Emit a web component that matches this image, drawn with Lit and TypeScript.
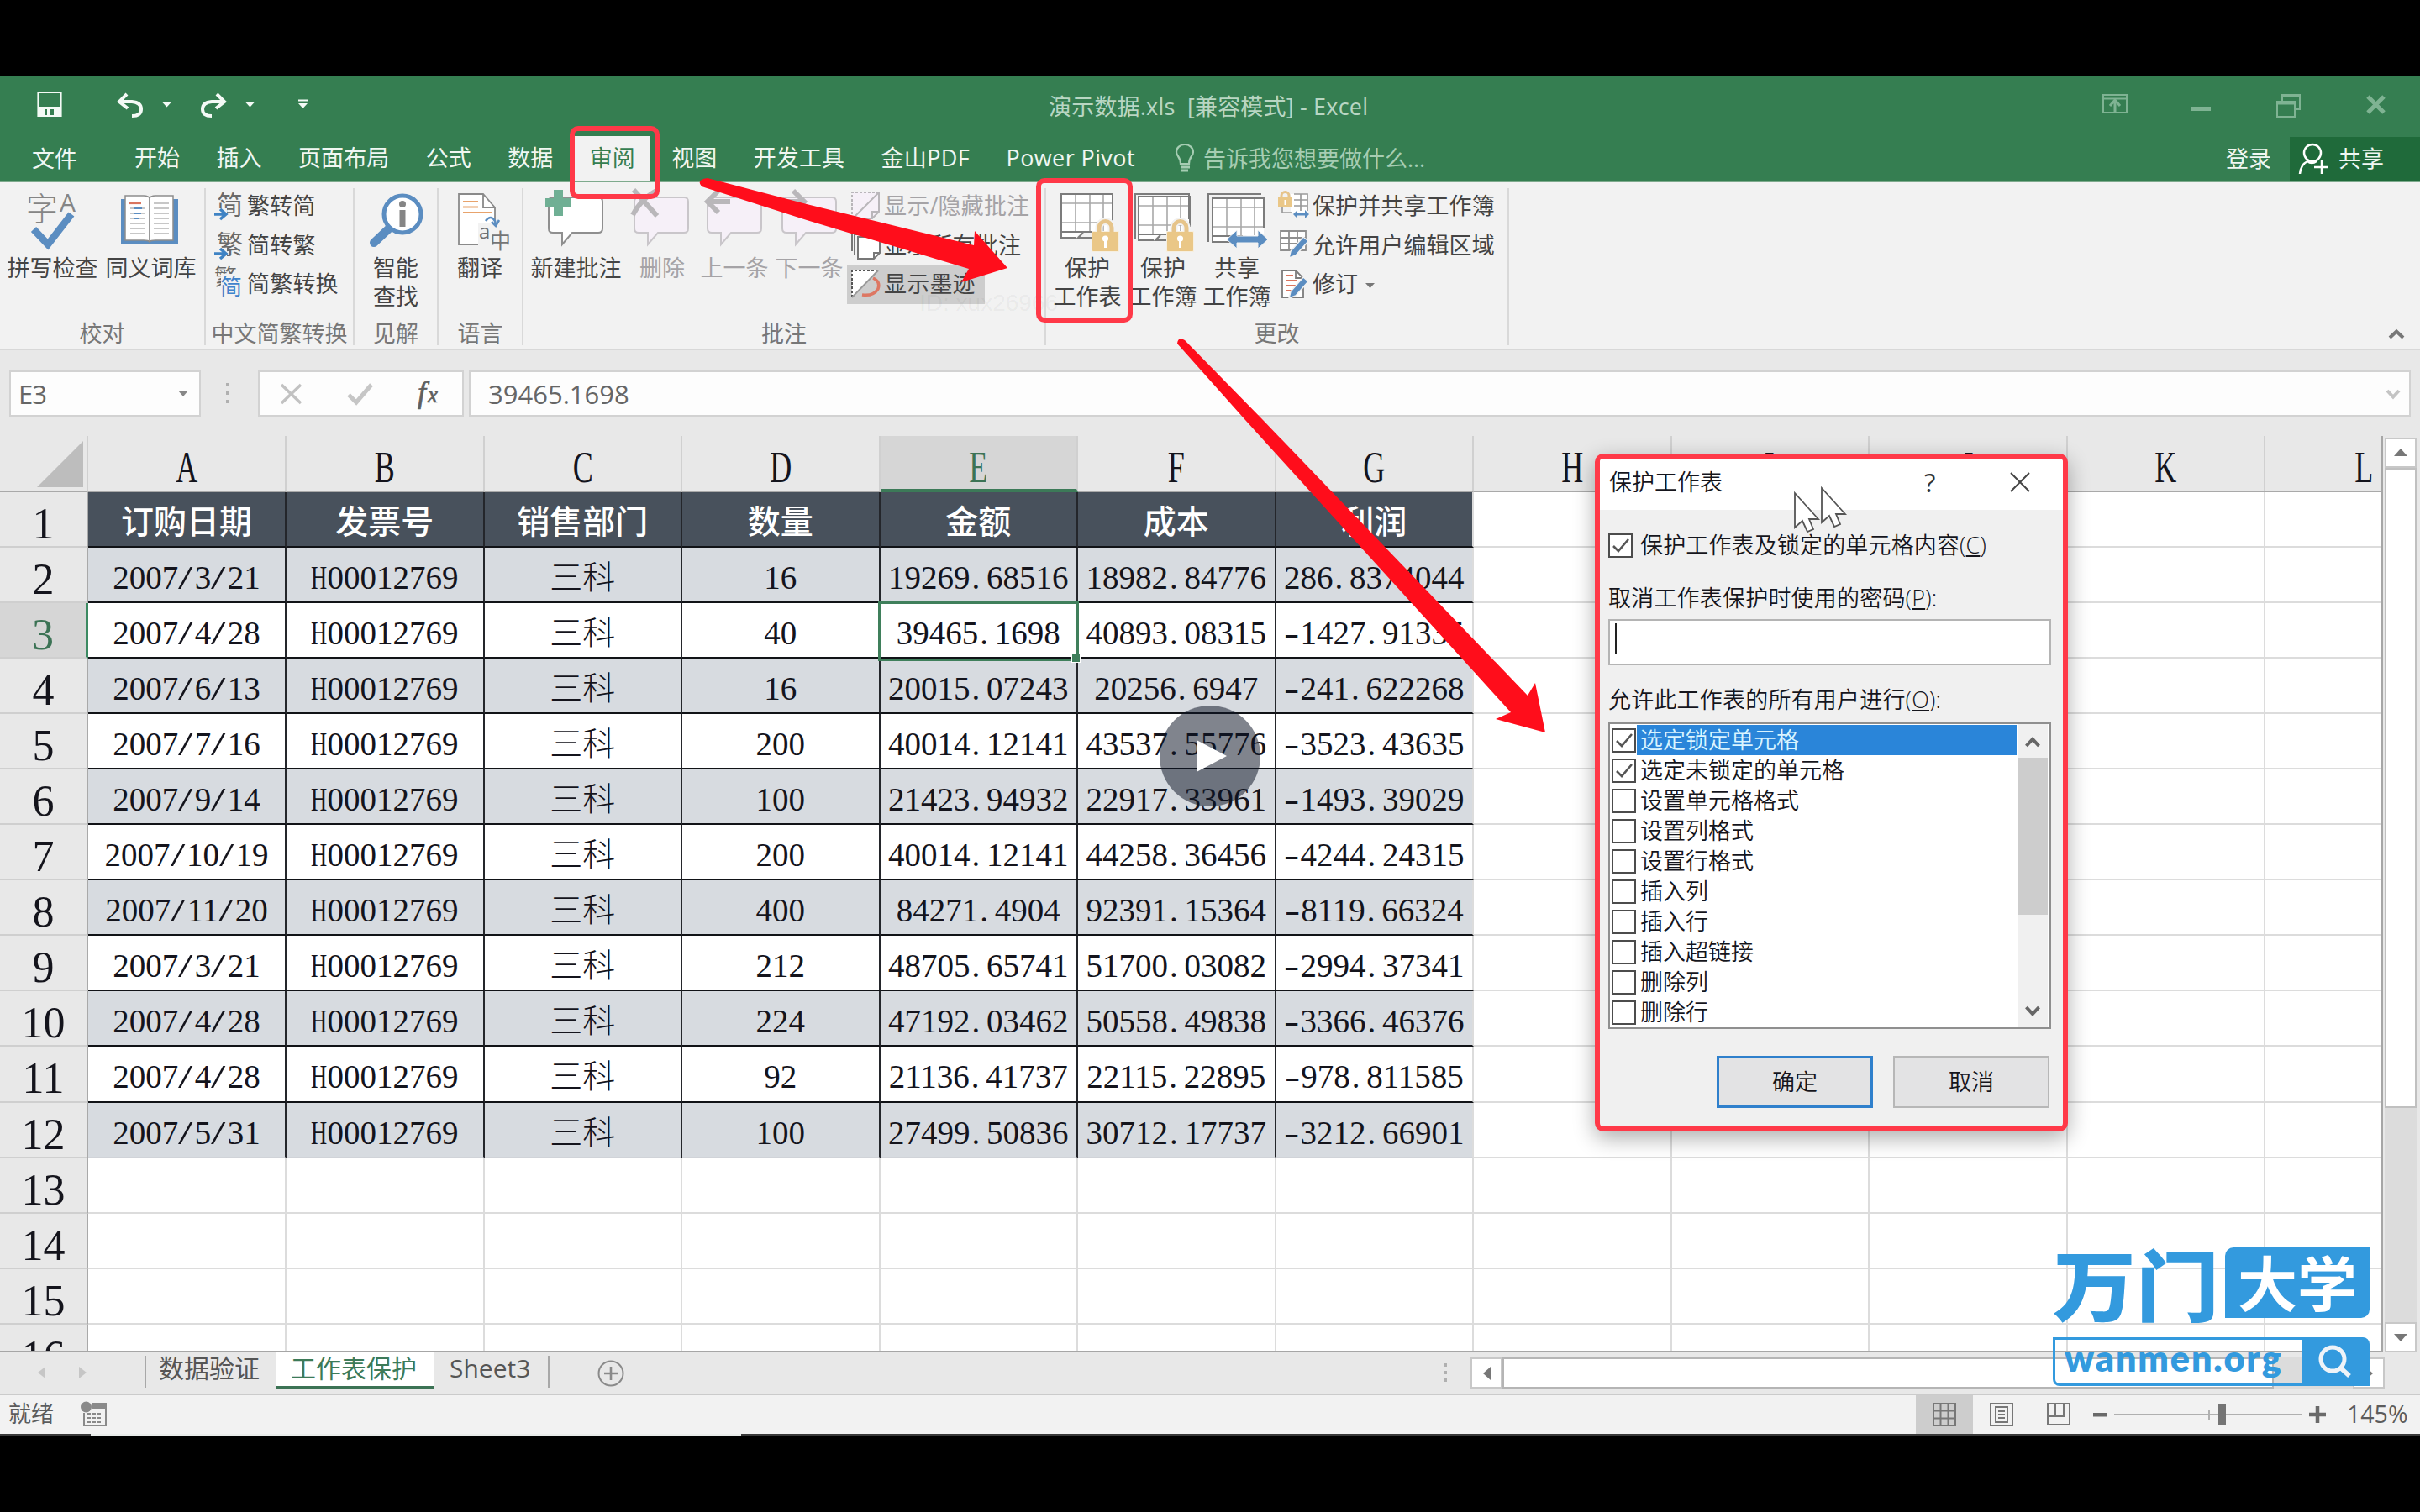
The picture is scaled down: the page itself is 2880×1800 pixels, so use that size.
import { LitElement, html, svg, css, nothing, type TemplateResult } from "lit";
import { customElement, property } from "lit/decorators.js";
import { classMap } from "lit/directives/class-map.js";

/** Icon frame: the four numbers are the viewBox, which is also the drawn size. */
const icon = (x: number, y: number, w: number, h: number, body: unknown) =>
  html`<svg class="icon" width=${w} height=${h} viewBox="${x} ${y} ${w} ${h}">${body}</svg>`;

const BLUE = "#5b8dc1";

/* ---------- sheet data ---------- */
const COLS = ["A", "B", "C", "D", "E", "F", "G", "H", "I", "J", "K", "L"];
const HEADS = ["订购日期", "发票号", "销售部门", "数量", "金额", "成本", "利润"];
const ROWS = [
  ["2007/3/21", "H00012769", "三科", "16", "19269.68516", "18982.84776", "286.8374044"],
  ["2007/4/28", "H00012769", "三科", "40", "39465.1698", "40893.08315", "-1427.91335"],
  ["2007/6/13", "H00012769", "三科", "16", "20015.07243", "20256.6947", "-241.622268"],
  ["2007/7/16", "H00012769", "三科", "200", "40014.12141", "43537.55776", "-3523.43635"],
  ["2007/9/14", "H00012769", "三科", "100", "21423.94932", "22917.33961", "-1493.39029"],
  ["2007/10/19", "H00012769", "三科", "200", "40014.12141", "44258.36456", "-4244.24315"],
  ["2007/11/20", "H00012769", "三科", "400", "84271.4904", "92391.15364", "-8119.66324"],
  ["2007/3/21", "H00012769", "三科", "212", "48705.65741", "51700.03082", "-2994.37341"],
  ["2007/4/28", "H00012769", "三科", "224", "47192.03462", "50558.49838", "-3366.46376"],
  ["2007/4/28", "H00012769", "三科", "92", "21136.41737", "22115.22895", "-978.811585"],
  ["2007/5/31", "H00012769", "三科", "100", "27499.50836", "30712.17737", "-3212.66901"],
];
const TABS = ["开始", "插入", "页面布局", "公式", "数据", "审阅", "视图", "开发工具", "金山PDF", "Power Pivot"];
const PERMS = ["选定锁定单元格", "选定未锁定的单元格", "设置单元格格式", "设置列格式", "设置行格式", "插入列", "插入行", "插入超链接", "删除列", "删除行"];

/* ---------- icon parts ---------- */
const gridIcon = (x: number, y: number) => svg`
  <path d="M${x} ${y}h61v52h-13l-8-8h-14l-9 8h-17z" fill="#fff" stroke="none"/>
  <path d="M${x + 17} ${y}v44M${x + 34} ${y}v44M${x + 50} ${y}v44M${x} ${y + 11}h61M${x} ${y + 34}h61" stroke="#a9a9a9" stroke-width="1.6" fill="none"/>
  <path d="M${x + 36} ${y + 52}h-16l6-6M${x + 18} ${y + 52}h-18v-52h61v36M${x} ${y + 45}h36" stroke="#7c7c7c" stroke-width="2" fill="none"/>`;
const lock = (x: number, y: number) => svg`
  <path d="M${x + 8} ${y + 16}v-6a7.500 7.500 0 0 1 15 0v6" fill="none" stroke="#f2f2f2" stroke-width="9"/>
  <rect x=${x - 1} y=${y + 14} width="33" height="25" fill="#f6efe0"/>
  <path d="M${x + 8} ${y + 16}v-6a7.500 7.500 0 0 1 15 0v6" fill="none" stroke="#e6c48a" stroke-width="5"/>
  <rect x=${x} y=${y + 15} width="31" height="23" rx="1" fill="#eac787"/>
  <circle cx=${x + 15.500} cy=${y + 23} r="3.600" fill="#fff"/><rect x=${x + 14} y=${y + 24} width="3" height="10" fill="#fff"/>`;
const bubble = (x: number, fill: string, line: string) => svg`
  <path d="M${x + 4} 235h54q5 0 5 5v32q0 5-5 5h-31l-12 14v-14h-11q-5 0-5-5v-32q0-5 5-5z" fill=${fill} stroke=${line} stroke-width="2"/>`;
const miniBlueArrow = (x: number, y: number) => svg`
  <path d="M${x} ${y + 5}l5-5v3.500h9v-3.500l5 5-5 5v-3.500h-9v3.500z" fill=${BLUE}/>`;
const pencil = (x: number, y: number) => svg`
  <path d="M${x + 17} ${y}l6 5-15 17-8 3 2-8z" fill=${BLUE} stroke="#f2f2f2" stroke-width="1.500"/>`;
const noteCorner = (line: string, dash: boolean, fill: string) => svg`
  <path d="M1 1h32v23l-8 8h-24z" fill=${fill}/>
  <path d="M33 1h-32v31" fill="none" stroke=${line} stroke-width="2" stroke-dasharray=${dash ? "3 2" : "none"}/>
  <path d="M1 32h24l8-8v-23M25 32v-8h8" fill="none" stroke=${line} stroke-width="2"/>`;

const ICONS = {
  spell: icon(4, 228, 117, 74, svg`
    <text x="31" y="262" font-size="38" font-weight="300" fill="#858585" font-family="Noto Sans CJK SC, sans-serif">字</text>
    <text x="71" y="252" font-size="30" fill="#858585" font-family="Open Sans, sans-serif">A</text>
    <path d="M40 273l17 18 28-36" fill="none" stroke=${BLUE} stroke-width="8.500"/>`),
  book: icon(121, 228, 117, 74, svg`
    <rect x="144" y="237" width="68" height="54" fill=${BLUE}/>
    <path d="M149 233h22q6 0 7 3 1-3 7-3h21v53h-21q-6 0-7 2-1-2-7-2h-22z" fill="#fff" stroke="#8d8d8d" stroke-width="1.500"/>
    <path d="M178 236v51" stroke="#9a9a9a" stroke-width="2"/>
    <path d="M155 248h17M155 254h17M155 260h17M155 266h17M155 272h17M155 278h17M183 242h18M183 248h18M183 254h18M183 260h18M183 266h18M183 272h18M183 278h18" stroke="#b5b5b5" stroke-width="1.600"/>
    <path d="M154 242h14" stroke="#d9755f" stroke-width="2.200"/><path d="M159 248h10M159 254h9M159 260h7" stroke=${BLUE} stroke-width="2"/>`),
  lookup: icon(421, 228, 100, 74, svg`
    <path d="M463 272l-18 17" stroke=${BLUE} stroke-width="10" stroke-linecap="round"/>
    <circle cx="479" cy="255" r="22" fill="#fff" stroke=${BLUE} stroke-width="5"/>
    <circle cx="479" cy="243" r="4" fill="#858585"/><rect x="475.500" y="250" width="7" height="20" fill="#858585"/>`),
  translate: icon(522, 228, 100, 74, svg`
    <path d="M547 231h30l13 15v45h-43z" fill="#fff"/>
    <path d="M582 291h-35v-60h29l14 16v16M576 231v16h14" fill="none" stroke="#8a8a8a" stroke-width="1.800"/>
    <path d="M552 240h18M552 246.500h18M552 253h34" stroke="#e8a36c" stroke-width="2"/>
    <path d="M570 266h38v36h-38z" fill="#f2f2f2"/>
    <text x="571" y="284" font-size="24" fill="#6f6f6f" font-family="Open Sans, sans-serif">a</text>
    <text x="584" y="296" font-size="25" fill="#757575" font-family="Noto Sans CJK SC, sans-serif">中</text>
    <path d="M579 263q6-8 11 0l1 4M586 264l5 5 4-7" fill="none" stroke=${BLUE} stroke-width="2.600"/>`),
  newNote: icon(622, 226, 128, 76, svg`${bubble(654, "#fff", "#8f8f8f")}
    <rect x="659" y="226" width="11" height="31" fill="#6faf94"/><rect x="649" y="236" width="31" height="11" fill="#6faf94"/>`),
  delNote: icon(750, 226, 76, 76, svg`${bubble(756, "#f6f0f8", "#c9c6ca")}
    <path d="M754 226l28 31M781 227q-18 10-28 29" stroke="#b9b7ba" stroke-width="6" fill="none"/>`),
  prevNote: icon(826, 226, 96, 76, svg`${bubble(843, "#f6f0f8", "#c9c6ca")}
    <path d="M842 240h27M855 227l-13 13 13 13" stroke="#b9b7ba" stroke-width="6" fill="none"/>`),
  nextNote: icon(922, 226, 82, 76, svg`${bubble(932, "#f6f0f8", "#c9c6ca")}
    <path d="M930 240h27M944 227l13 13-13 13" stroke="#b9b7ba" stroke-width="6" fill="none"/>`),
  protectSheet: icon(1249, 228, 90, 74, svg`${gridIcon(1263, 231)}${lock(1300, 261)}`),
  protectBook: icon(1339, 228, 90, 74, svg`${gridIcon(1355, 234)}<path d="M1351 284v-53h64v30" fill="none" stroke="#7c7c7c" stroke-width="2"/>${lock(1389, 261)}`),
  shareBook: icon(1429, 228, 86, 74, svg`${gridIcon(1443, 236)}<path d="M1438 288v-57h63" fill="none" stroke="#7c7c7c" stroke-width="2"/>
    <path d="M1460 285l12-11v7h25v-7l12 11-12 11v-7h-25v7z" fill=${BLUE} stroke="#f2f2f2" stroke-width="1"/>`),
};

const convIcon = (back: string, front: string, both: boolean) => html`<svg class="icon" width="38" height="40" viewBox="0 0 38 40">
  ${both
    ? svg`<text x="2" y="22" font-size="27" fill="#6a6a6a" font-family="Noto Sans CJK SC, sans-serif">${back}</text>
      <rect x="10" y="8" width="26" height="30" fill="#f2f2f2"/>
      <text x="9" y="33" font-size="26" fill="#3f83cc" font-family="Noto Sans CJK SC, sans-serif">${front}</text>`
    : svg`<text x="5" y="30" font-size="31" fill="#6a6a6a" font-family="Noto Sans CJK SC, sans-serif">${back}</text>
      <rect x="0" y="23" width="17" height="13" fill="#f2f2f2"/>
      <path d="M2 30h13M9 24l7 6-7 6" fill="none" stroke="#3f83c4" stroke-width="3.500"/>`}
</svg>`;

/** Text set on a half-em pitch, so that digits, signs and capitals share one advance. */
const pitch = (text: string): TemplateResult[] =>
  [...text].map((c) =>
    /[\/.\-H]/.test(c)
      ? html`<span class=${c === "H" ? "half wide" : c === "-" ? "half dash" : c === "/" ? "half slash" : "half dot"}>${c}</span>`
      : html`${c}`);

@customElement("ribbon-group")
class RibbonGroup extends LitElement {
  @property() label = "";
  static styles = css`
    :host { display: flex; flex-direction: column; height: 199px; box-sizing: border-box; position: relative; }
    .body { display: flex; height: 163px; }
    .label { height: 34px; line-height: 34px; text-align: center; color: #777; white-space: nowrap; margin-left: -2px; }
    .rule { position: absolute; right: 0; top: 7px; bottom: 5px; width: 2px; background: #d9d9d9; }
  `;
  render() {
    return html`<div class="body"><slot></slot></div><div class="label">${this.label}</div><div class="rule"></div>`;
  }
}

@customElement("protect-dialog")
class ProtectDialog extends LitElement {
  static styles = css`
    :host { display: flex; flex-direction: column; box-sizing: border-box; width: 563px; height: 807px; border: 6px solid #ff3948;
      border-radius: 10px; background: #f0f0f0; box-shadow: 0 8px 26px rgba(0,0,0,.32); font-size: 27px; color: #15151c;
      font-weight: 350; overflow: hidden; }
    .icon { display: block; flex: none; overflow: visible; }
    .bar { display: flex; align-items: center; height: 61px; background: #fff; padding: 0 0 6px 11px; box-sizing: border-box; }
    .bar .name { flex: 1; }
    .bar .help { font-size: 31px; width: 18px; margin-right: 84px; color: #333; font-weight: 400; }
    .bar .icon { margin-right: 39px; }
    .content { display: flex; flex-direction: column; padding: 22px 14px 0 10px; }
    .lock-row { display: flex; align-items: center; height: 40px; gap: 9px; letter-spacing: .15px; }
    .box { width: 29px; height: 29px; box-sizing: border-box; border: 2px solid #4c4c4c; background: #fff; flex: none; }
    .box svg { display: block; }
    .lbl { height: 36px; line-height: 36px; white-space: nowrap; letter-spacing: .2px; }
    .l1 { margin-top: 25px; }
    .l2 { margin-top: 23px; }
    .field { height: 55px; box-sizing: border-box; border: 2px solid #b4b4b4; background: #fff; margin-top: 7px; padding: 3px 6px; }
    .caret { width: 2px; height: 36px; background: #222; }
    .list { display: flex; justify-content: space-between; height: 365px; box-sizing: border-box; border: 2px solid #8f8f8f; background: #fff; margin-top: 9px; padding-right: 2px; overflow: hidden; }
    .items { display: flex; flex-direction: column; width: 484px; padding-top: 1px; }
    .item { display: flex; align-items: center; height: 36.050px; padding-left: 2px; gap: 1px; flex: none; }
    .item .txt { flex: 1; line-height: 36px; padding-left: 4px; }
    .item.sel .txt { background: #2a85d9; color: #d9f4ff; }
    .scroll { display: flex; flex-direction: column; width: 36px; background: #f0f0f0; align-items: center; }
    .scroll .up { padding: 15px 0 12px; }
    .thumb { width: 36px; height: 187px; background: #cdcdcd; }
    .scroll .down { margin-top: 108px; }
    .buttons { display: flex; justify-content: flex-end; gap: 24px; margin-top: 32px; padding-right: 2px; }
    .btn { width: 186px; height: 62px; box-sizing: border-box; border: 2px solid #b7b7b7; background: #e3e3e4; line-height: 57px; text-align: center; }
    .btn.ok { border: 3px solid #2f80cc; line-height: 55px; }
  `;
  private check(on: boolean) {
    return html`<span class="box">${on ? html`<svg width="25" height="25" viewBox="0 0 25 25"><path d="M4 13l6 6 12-14" fill="none" stroke="#555" stroke-width="2.600"/></svg>` : nothing}</span>`;
  }
  render() {
    return html`
      <div class="bar"><span class="name">保护工作表</span><span class="help">?</span>
        ${icon(0, 0, 24, 24, svg`<path d="M1 1l22 22M23 1l-22 22" stroke="#444" stroke-width="2"/>`)}</div>
      <div class="content">
        <div class="lock-row">${this.check(true)}<span>保护工作表及锁定的单元格内容(<u>C</u>)</span></div>
        <div class="lbl l1">取消工作表保护时使用的密码(<u>P</u>):</div>
        <div class="field"><div class="caret"></div></div>
        <div class="lbl l2">允许此工作表的所有用户进行(<u>O</u>):</div>
        <div class="list">
          <div class="items">${PERMS.map((p, i) => html`<div class=${classMap({ item: true, sel: i === 0 })}>${this.check(i < 2)}<span class="txt">${p}</span></div>`)}</div>
          <div class="scroll">
            <div class="up">${icon(0, 0, 18, 13, svg`<path d="M1.500 11l7.500-8 7.500 8" fill="none" stroke="#666" stroke-width="4"/>`)}</div>
            <div class="thumb"></div>
            <div class="down">${icon(0, 0, 18, 13, svg`<path d="M1.500 2l7.500 8 7.500-8" fill="none" stroke="#666" stroke-width="4"/>`)}</div>
          </div>
        </div>
        <div class="buttons"><div class="btn ok">确定</div><div class="btn">取消</div></div>
      </div>`;
  }
}

@customElement("app-root")
class AppRoot extends LitElement {
  static styles = css`
    :host { display: block; width: 2880px; height: 1800px; background: #000; position: relative; overflow: hidden;
      font-family: "Open Sans", "Noto Sans CJK SC", sans-serif; font-size: 27px; line-height: 34px; color: #444; }
    .icon { display: block; flex: none; overflow: visible; }
    .app { display: flex; flex-direction: column; padding-top: 90px; }
    .title { display: flex; height: 73px; background: #357e51; color: #b9d6c3; align-items: center; }
    .quick { display: flex; width: 1248px; }
    .name { flex: 1; white-space: pre; letter-spacing: .2px; }
    .tabs { display: flex; height: 54px; background: #357e51; color: #f0f7f2; align-items: center; white-space: nowrap; box-sizing: border-box; border-bottom: 2px solid #7eaa8d; }
    .file { width: 160px; padding-left: 38px; box-sizing: border-box; }
    .main { display: flex; gap: 7.300px; margin-left: -18px; height: 54px; letter-spacing: .1px; }
    .tab { line-height: 52px; padding: 0 18px; }
    .tab.on { background: #f2f2f2; color: #357e51; }
    .tab.latin { letter-spacing: .4px; }
    .tell { display: flex; align-items: center; gap: 10px; margin-left: 29px; color: #a6cdb3; flex: 1; }
    .login { margin-right: 22px; }
    .share { display: flex; align-items: center; gap: 12px; width: 155px; height: 53px; background: #1f6a3a; padding-left: 11px; box-sizing: border-box; }

    .ribbon { display: flex; height: 200px; background: #f2f2f2; box-sizing: border-box; border-bottom: 2px solid #d8d8d8; }
    .big { display: flex; flex-direction: column; align-items: center; text-align: center; white-space: nowrap; padding-top: 11px; line-height: 34px; }
    .big.hi { padding-top: 9px; }
    .dim { color: #a5a3a6; }
    .rows { display: flex; flex-direction: column; padding-top: 5px; }
    .row { display: flex; align-items: center; height: 46.500px; gap: 3px; white-space: nowrap; letter-spacing: .2px; }
    .g1 { width: 245px; } .g1 .big:first-child { margin-left: 4px; }
    .g2 { width: 177px; } .g2 .rows { padding-left: 8px; }
    .g3 { width: 100px; } .g4 { width: 101px; } .g5 { width: 622px; } .g6 { width: 551px; }
    .w117 { width: 117px; } .w100 { width: 100px; } .w128 { width: 127px; } .w76 { width: 76px; } .w96 { width: 96px; } .w82 { width: 82px; }
    .w90 { width: 90px; } .w86 { width: 86px; }
    .g3 .big, .g4 .big { margin-left: -1px; }
    .g5 .big:first-child { margin-left: -1px; margin-right: 1px; }
    .g6 .big:first-child { margin-left: 4px; }
    .g5 .rows { margin-left: 4px; } .g5 .row { padding-left: 5px; gap: 5px; padding-right: 8px; }
    .g5 .row.on { background: #cdcdcd; width: 151px; }
    .g6 .rows { margin-left: 6px; } .g6 .row { gap: 5px; letter-spacing: .1px; }
    .collapse { margin: 175px 0 0 1046px; }

    .formula { display: flex; height: 102px; background: #e8e8e8; padding: 24px 0 0 11px; box-sizing: border-box; font-size: 31px; color: #666; }
    .fbox { height: 55px; background: #fdfdfd; border: 2px solid #d2d2d2; box-sizing: border-box; display: flex; align-items: center; line-height: 50px; }
    .ref { width: 228px; justify-content: space-between; padding: 0 13px 0 9px; letter-spacing: -1px; }
    .dots { margin: 15px 32px 0 28px; }
    .fx { width: 245px; padding-left: 24px; }
    .val { flex: 1; margin: 0 11px 0 6px; justify-content: space-between; padding: 0 10px 0 21px; }

    .work { display: flex; height: 1091px; background: #e8e8e8; }
    .sheet { width: 2836px; height: 1091px; overflow: hidden; position: relative; box-sizing: border-box; border-right: 2px solid #a6a6a6; border-bottom: 2px solid #a6a6a6; background: #fff;
      font-family: "Liberation Serif", "Noto Sans CJK SC", serif; color: #14141c; }
    .line { display: grid; grid-template-columns: 105px 236px repeat(11, 235.500px); height: 66.050px; }
    .line.top { height: 67px; }
    .line > div { box-sizing: border-box; text-align: center; white-space: nowrap; }
    .ch { font-size: 53px; line-height: 74px; background: #e8e8e8; border-right: 2px solid #d0d0d0; border-bottom: 2px solid #a9a9a9; overflow: hidden; }
    .ch span { display: inline-block; transform: scaleX(.68); }
    .ch.on { background: #d6d6d6; color: #3c7355; border-bottom: 4px solid #3c7a58; }
    .rh { font-size: 52px; line-height: 76px; height: 66.050px; overflow: hidden; background: #e8e8e8; border-right: 2px solid #a9a9a9; border-bottom: 2px solid #cfcfcf; }
    .rh.on { background: #d6d6d6; color: #3c7355; border-right: 3px solid #3c8a62; }
    .corner { background: #e8e8e8; border-right: 2px solid #d0d0d0; border-bottom: 2px solid #a9a9a9; padding: 6px 0 0 44px; }
    .c { font-size: 39px; line-height: 71px; height: 66.050px; border-right: 2px solid #dcdcdc; border-bottom: 2px solid #dcdcdc; }
    .c.d { border-right-color: #24262b; border-bottom-color: #111317; }
    .c.g { border-right-color: #dcdcdc; }
    .c.last { border-bottom-color: #d0d3d8; }
    .c.band { background: #d7dbe0; }
    .c.h { background: #48515c; color: #fff; font-weight: 500; }
    .c.zh { font-weight: 300; }
    .half { display: inline-block; width: .5em; text-align: left; }
    .wide { transform: scaleX(.68); transform-origin: 0 0; }
    .dash { transform: scaleX(1.400); transform-origin: 0 0; }
    .slash { transform: scaleX(1.600); transform-origin: 0 0; }
    .dot { text-indent: .050em; }
    .cursor { position: absolute; left: 1045px; top: 197px; width: 239px; height: 71px; box-sizing: border-box; border: 3px solid #3f7f5b; }
    .cursor i { position: absolute; right: -5px; bottom: -5px; width: 9px; height: 9px; background: #3f7f5b; border: 1px solid #fff; }
    .vbar { display: flex; flex-direction: column; width: 38px; margin-left: 2px; padding-top: 2px; }
    .sbtn { background: #fff; border: 2px solid #c8c8c8; box-sizing: border-box; display: flex; align-items: center; justify-content: center; }
    .vbar .sbtn { height: 36px; }
    .vthumb { height: 763px; background: #fff; border: 2px solid #c0c0c0; box-sizing: border-box; }
    .vtrack { height: 256px; background: #dcdcdc; }

    .sheets { display: flex; height: 51px; background: #e8e8e8; box-sizing: border-box; border-bottom: 2px solid #cbcbcb; font-size: 30px; line-height: 38px; color: #555; white-space: nowrap; }
    .nav { display: flex; gap: 40px; padding: 17px 0 0 45px; width: 127px; }
    .stab { height: 38px; margin-top: 4px; box-sizing: border-box; line-height: 29px; border-left: 2px solid #a8a8a8; width: 157px; padding-left: 15px; }
    .stab.on { background: #fff; color: #3c7a58; border-left: 0; border-bottom: 4px solid #3c7355; height: 46px; margin-top: -2px; width: 187px; padding: 6px 0 0 17px; }
    .stab.last { border-left: 0; width: 138px; border-right: 2px solid #a8a8a8; padding-left: 19px; font-size: 30px; }
    .plus { margin: 9px 0 0 57px; }
    .hbar { display: flex; margin: 6px 0 0 975px; align-items: flex-start; }
    .hbar .sbtn { height: 37px; width: 38px; }
    .hthumb { width: 918px; height: 37px; background: #fff; border: 2px solid #b5b5b5; box-sizing: border-box; }
    .htrack { width: 94px; height: 37px; background: #dcdcdc; }
    .hdots { margin: 7px 27px 0 0; }

    .status { display: flex; height: 46px; background: #f2f2f2; align-items: center; color: #5c5c5c; padding-left: 10px; }
    .status .ready { width: 86px; margin-top: -2px; }
    .status .modes { display: flex; margin-left: auto; align-items: center; }
    .mode { width: 68px; height: 46px; display: flex; align-items: center; justify-content: center; }
    .mode.on { background: #cdcdcd; }
    .pct { font-size: 28.500px; width: 87px; margin: -2px 0 0 -2px; }
    .edge { display: flex; height: 3px; background: #3a3a3a; padding-left: 108px; }
    .edge i { width: 774px; background: #e9ecea; }

    .over { position: absolute; left: 0; top: 0; }
    .frame { position: absolute; box-sizing: border-box; border: 6px solid #ff3948; border-radius: 10px; }
    .f1 { left: 678px; top: 150px; width: 107px; height: 87px; }
    .f2 { left: 1233px; top: 212px; width: 115px; height: 172px; }
    .mark { position: absolute; left: 1094px; top: 344px; font: 28px/34px "Liberation Sans", sans-serif; color: rgba(0,0,0,.055); }
    .dialog { position: absolute; left: 1898px; top: 540px; }
    .logo { position: absolute; left: 2443px; top: 1485px; width: 377px; color: #339ade; display: flex; flex-direction: column; gap: 23px; }
    .brand { display: flex; height: 84px; gap: 8px; font-weight: 700; }
    .brand .a { font-size: 99px; line-height: 84px; width: 197px; white-space: nowrap; font-family: "Noto Sans CJK SC", sans-serif; font-weight: 900; transform: scaleY(.93); transform-origin: 0 38%; }
    .brand .b { flex: 1; background: #339ade; color: #fff; border-radius: 10px 0 10px 0; text-align: center; font-size: 71px; line-height: 78px; font-family: "Noto Sans CJK SC", sans-serif; }
    .site { display: flex; height: 58px; box-sizing: border-box; border: 3px solid #339ade; border-radius: 0 8px 0 8px; }
    .site .url { flex: 1; font: 800 43px/43px Lato, sans-serif; padding-left: 11px; letter-spacing: 1.900px; }
    .site .go { width: 78px; background: #339ade; display: flex; align-items: center; justify-content: center; }
  `;

  private titleBar() {
    const w = "#f4faf6";
    const f = "#7fb393";
    return html`<div class="title">
      <div class="quick">${icon(0, 90, 400, 73, svg`
        <path d="M45.500 110h27v28h-27z" fill="none" stroke=${w} stroke-width="2.200"/><rect x="46" y="127" width="27" height="11" fill=${w}/><path d="M53 130h3v7h-3zM59 130h5v7h-5z" fill="#357e51"/>
        <path d="M151 112l-9 9 10 8M143 121h14q11 1 11 9 0 8-11 8" fill="none" stroke=${w} stroke-width="4"/>
        <path d="M193 121.500h11l-5.500 6z" fill=${w}/>
        <path d="M258 112l9 9-10 8M266 121h-14q-11 1-11 9 0 8 11 8" fill="none" stroke=${w} stroke-width="4"/>
        <path d="M292 121.500h11l-5.500 6z" fill=${w}/>
        <path d="M355 119.500h11" stroke=${w} stroke-width="2"/><path d="M355 123h11l-5.500 6z" fill=${w}/>`)}</div>
      <div class="name">演示数据.xls  [兼容模式] - Excel</div>
      ${icon(2480, 90, 400, 73, svg`
        <path d="M2503 113h28v21h-28zM2503 117.500h28" fill="none" stroke=${f} stroke-width="2"/><path d="M2517 133v-13M2511 126l6-7 6 7" fill="none" stroke=${f} stroke-width="3"/>
        <rect x="2608" y="127" width="23" height="5" fill=${f}/>
        <path d="M2716 120v-7h21v17h-5M2710 121h21v18h-21z" fill="none" stroke=${f} stroke-width="2"/><path d="M2715 114h22M2710 122.500h22" stroke=${f} stroke-width="4"/>
        <path d="M2818 115l19 19M2837 115l-19 19" stroke=${f} stroke-width="5"/>`)}
    </div>`;
  }

  private tabBar() {
    return html`<div class="tabs">
      <div class="file">文件</div>
      <div class="main">${TABS.map((t) => html`<div class=${classMap({ tab: true, on: t === "审阅", latin: /[A-Z]/.test(t) })}>${t}</div>`)}</div>
      <div class="tell">${icon(1396, 174, 24, 34, svg`<path d="M1403 197q0-5-3-9-2-3-2-5a10 9 0 0 1 20 0q0 2-2 5-3 4-3 9z" fill="none" stroke="#a6cdb3" stroke-width="2.200"/><path d="M1403 201h11M1404 205h8" stroke="#a6cdb3" stroke-width="3"/>`)}<span>告诉我您想要做什么...</span></div>
      <div class="login">登录</div>
      <div class="share">${icon(2736, 171, 35, 38, svg`<circle cx="2752" cy="183" r="10" fill="none" stroke="#fff" stroke-width="2.500"/><path d="M2737 208q1-11 9-15 5 4 11 0M2763 192v16M2754 200h17" fill="none" stroke="#fff" stroke-width="2.500"/>`)}<span>共享</span></div>
    </div>`;
  }

  private ribbon() {
    return html`<div class="ribbon">
      <ribbon-group class="g1" label="校对">
        <div class="big w117">${ICONS.spell}拼写检查</div><div class="big w117">${ICONS.book}同义词库</div>
      </ribbon-group>
      <ribbon-group class="g2" label="中文简繁转换">
        <div class="rows">
          <div class="row">${convIcon("简", "", false)}繁转简</div>
          <div class="row">${convIcon("繁", "", false)}简转繁</div>
          <div class="row">${convIcon("繁", "简", true)}简繁转换</div>
        </div>
      </ribbon-group>
      <ribbon-group class="g3" label="见解"><div class="big w100">${ICONS.lookup}智能<br>查找</div></ribbon-group>
      <ribbon-group class="g4" label="语言"><div class="big w100">${ICONS.translate}翻译</div></ribbon-group>
      <ribbon-group class="g5" label="批注">
        <div class="big hi w128">${ICONS.newNote}新建批注</div>
        <div class="big hi dim w76">${ICONS.delNote}删除</div>
        <div class="big hi dim w96">${ICONS.prevNote}上一条</div>
        <div class="big hi dim w82">${ICONS.nextNote}下一条</div>
        <div class="rows">
          <div class="row dim">${icon(0, 0, 34, 34, svg`${noteCorner("#b9b6ba", true, "#f6f0f8")}<path d="M3 31l29-29" stroke="#b9b6ba" stroke-width="2"/>`)}显示/隐藏批注</div>
          <div class="row">${icon(0, 0, 34, 34, svg`<path d="M1 24v-23h28M4 28v-24h27" fill="none" stroke="#777" stroke-width="2"/><path d="M8 7h26v19l-7 7h-19z" fill="#fff" stroke="#777" stroke-width="2"/><path d="M27 33v-7h7" fill="none" stroke="#777" stroke-width="2"/>`)}显示所有批注</div>
          <div class="row on">${icon(0, 0, 34, 34, svg`<path d="M1 1h31l-31 32z" fill="#fff"/><path d="M32 1h-31v32" fill="none" stroke="#555" stroke-width="2" stroke-dasharray="3 2"/><path d="M1 33l31-32" stroke="#999" stroke-width="2"/><path d="M26 10q9 4 6 13-6 9-19 7" fill="none" stroke="#dd7763" stroke-width="3.500"/>`)}显示墨迹</div>
        </div>
      </ribbon-group>
      <ribbon-group class="g6" label="更改">
        <div class="big w90">${ICONS.protectSheet}保护<br>工作表</div>
        <div class="big w90">${ICONS.protectBook}保护<br>工作簿</div>
        <div class="big w86">${ICONS.shareBook}共享<br>工作簿</div>
        <div class="rows">
          <div class="row">${icon(1521, 228, 36, 36, svg`<path d="M1536 232h20v23h-20z" fill="#fff"/><path d="M1540 232h16v20M1540 239h16M1540 246h16M1548 232v20M1526 248v6h12" fill="none" stroke="#9a9a9a" stroke-width="1.700"/><path d="M1525 238v-4a4.500 4.500 0 0 1 9 0v4" fill="none" stroke="#e6c48a" stroke-width="3"/><rect x="1521" y="236" width="17" height="12" fill="#eac787"/><rect x="1528.500" y="239" width="2.500" height="6" fill="#fff"/>${miniBlueArrow(1539, 251)}`)}保护并共享工作簿</div>
          <div class="row">${icon(1521, 274, 36, 36, svg`<path d="M1524 275h30v23h-30z" fill="#fff"/><path d="M1524 275h30v23h-30zM1524 283h30M1524 290h30M1534 275v23M1544 275v23" fill="none" stroke="#8f8f8f" stroke-width="1.800"/>${pencil(1534, 282)}`)}允许用户编辑区域</div>
          <div class="row">${icon(1521, 320, 36, 36, svg`<path d="M1526 322h16l9 9v23h-25z" fill="#fff" stroke="#7c7c7c" stroke-width="1.800"/><path d="M1542 322v9h9" fill="none" stroke="#7c7c7c" stroke-width="1.800"/><path d="M1530 328h9M1530 334h14M1530 340h12M1530 346h8" stroke="#d9755f" stroke-width="2"/>${pencil(1534, 330)}`)}修订${icon(0, -6, 18, 14, svg`<path d="M4 0h11l-5.500 6z" fill="#777"/>`)}</div>
        </div>
      </ribbon-group>
      <div class="collapse">${icon(2843, 392, 20, 12, svg`<path d="M2845 402l8-7.500 8 7.500" fill="none" stroke="#777" stroke-width="4"/>`)}</div>
    </div>`;
  }

  private formulaBar() {
    return html`<div class="formula">
      <div class="fbox ref"><span>E3</span>${icon(0, 0, 12, 7, svg`<path d="M0 0h12l-6 7z" fill="#888"/>`)}</div>
      <div class="dots">${icon(0, 0, 8, 26, svg`<path d="M2 0h4v4h-4zM2 10h4v4h-4zM2 20h4v4h-4z" fill="#b0b0b0"/>`)}</div>
      <div class="fbox fx">${icon(334, 445, 190, 46, svg`
        <path d="M336 457l23 22M359 457l-23 22" stroke="#c2c2c2" stroke-width="3.500"/>
        <path d="M416 469l9 9 18-21" fill="none" stroke="#c6c6c6" stroke-width="5"/>
        <text x="498" y="478" font-size="36" font-style="italic" fill="#5f5f5f" stroke="#5f5f5f" stroke-width=".7" font-family="Liberation Serif, serif">f</text>
        <text x="510" y="478" font-size="27" font-style="italic" fill="#5f5f5f" stroke="#5f5f5f" stroke-width=".7" font-family="Liberation Serif, serif">x</text>`)}</div>
      <div class="fbox val"><span>39465.1698</span>${icon(0, 0, 18, 12, svg`<path d="M2 2l7 7.500 7-7.500" fill="none" stroke="#c4c4c4" stroke-width="4"/>`)}</div>
    </div>`;
  }

  private sheetLine(n: number) {
    const data = n === 1 ? HEADS : ROWS[n - 2];
    return html`<div class="line">
      <div class=${classMap({ rh: true, on: n === 3 })}>${n}</div>
      ${COLS.map((_, i) => {
        const text = data?.[i] ?? "";
        const cls = classMap({ c: true, d: text !== "", g: i === 6, h: n === 1 && text !== "", band: text !== "" && n > 1 && n % 2 === 0, last: n === 12 && text !== "", zh: i === 2 && n > 1 });
        return html`<div class=${cls}>${pitch(text)}</div>`;
      })}
    </div>`;
  }

  private sheet() {
    return html`<div class="work">
      <div class="sheet">
        <div class="line top">
          <div class="corner">${icon(0, 0, 55, 55, svg`<path d="M55 0v55h-55z" fill="#bdbdbd"/>`)}</div>
          ${COLS.map((c) => html`<div class=${classMap({ ch: true, on: c === "E" })}><span>${c}</span></div>`)}
        </div>
        ${Array.from({ length: 16 }, (_, i) => this.sheetLine(i + 1))}
        <div class="cursor"><i></i></div>
      </div>
      <div class="vbar">
        <div class="sbtn">${icon(0, 0, 16, 9, svg`<path d="M0 9h16l-8-9z" fill="#777"/>`)}</div>
        <div class="vthumb"></div><div class="vtrack"></div>
        <div class="sbtn">${icon(0, 0, 16, 9, svg`<path d="M0 0h16l-8 9z" fill="#777"/>`)}</div>
      </div>
    </div>`;
  }

  private bottom() {
    return html`<div class="sheets">
        <div class="nav">${icon(0, 0, 9, 14, svg`<path d="M9 0v14l-9-7z" fill="#c6c6c6"/>`)}${icon(0, 0, 9, 14, svg`<path d="M0 0v14l9-7z" fill="#c6c6c6"/>`)}</div>
        <div class="stab">数据验证</div><div class="stab on">工作表保护</div><div class="stab last">Sheet3</div>
        <div class="plus">${icon(0, 0, 32, 32, svg`<circle cx="16" cy="16" r="14.500" fill="none" stroke="#8a8a8a" stroke-width="2"/><path d="M16 8v16M8 16h16" stroke="#8a8a8a" stroke-width="2.600"/>`)}</div>
        <div class="hbar">
          <div class="hdots">${icon(0, 0, 5, 24, svg`<path d="M0 0h4v4h-4zM0 9h4v4h-4zM0 18h4v4h-4z" fill="#b0b0b0"/>`)}</div>
          <div class="sbtn">${icon(0, 0, 9, 16, svg`<path d="M9 0v16l-9-8z" fill="#777"/>`)}</div>
          <div class="hthumb"></div><div class="htrack"></div>
          <div class="sbtn">${icon(0, 0, 9, 16, svg`<path d="M0 0v16l9-8z" fill="#777"/>`)}</div>
        </div>
      </div>
      <div class="status">
        <div class="ready">就绪</div>
        ${icon(96, 1667, 32, 32, svg`<circle cx="102.500" cy="1674" r="6.500" fill="#8a8a8a"/><path d="M110 1671h16v5h-16z" fill="#8a8a8a"/><path d="M110 1670h16v26h-26v-15" fill="none" stroke="#8a8a8a" stroke-width="2"/><path d="M104 1682h19M104 1687h19M104 1692h19" stroke="#8a8a8a" stroke-width="2" stroke-dasharray="4 2"/>`)}
        <div class="modes">
          <div class="mode on">${icon(0, 0, 30, 30, svg`<path d="M2 2h26v26h-26zM10.500 2v26M19.500 2v26M2 10.500h26M2 19.500h26" fill="none" stroke="#777" stroke-width="2"/>`)}</div>
          <div class="mode">${icon(0, 0, 30, 30, svg`<path d="M2 2h26v26h-26zM8 6h14v18h-14zM11 11h8M11 15h8M11 19h8" fill="none" stroke="#777" stroke-width="2"/>`)}</div>
          <div class="mode">${icon(0, 0, 30, 30, svg`<path d="M2 2h26v25h-26zM2 17h19v-15M11 2v15" fill="none" stroke="#777" stroke-width="2"/>`)}</div>
          ${icon(2484, 1664, 311, 38, svg`<rect x="2491" y="1681" width="17" height="4.500" fill="#6a6a6a"/><path d="M2516 1683h224M2629 1678v11" stroke="#b0b0b0" stroke-width="2"/><rect x="2640" y="1671" width="9" height="25" fill="#757575"/><path d="M2748 1683h20M2758 1673v20" stroke="#6a6a6a" stroke-width="4.500"/>`)}
          <div class="pct">145%</div>
        </div>
      </div>
      <div class="edge"><i></i></div>`;
  }

  render() {
    const pointer = (x: number, y: number) => svg`<path d="M${x} ${y}v41l9-8 6 13 7-3-5-12h11z" fill="#fff" stroke="#555" stroke-width="1.800"/>`;
    return html`
      <div class="app">${this.titleBar()}${this.tabBar()}${this.ribbon()}${this.formulaBar()}${this.sheet()}${this.bottom()}</div>
      <div class="mark">ID: xux26966</div>
      <protect-dialog class="dialog"></protect-dialog>
      <div class="logo">
        <div class="brand"><div class="a">万门</div><div class="b">大学</div></div>
        <div class="site"><div class="url">wanmen.org</div><div class="go">${icon(0, 0, 40, 40, svg`<circle cx="18" cy="17" r="14" fill="none" stroke="#eef3f8" stroke-width="5"/><path d="M27 27l11 10" stroke="#eef3f8" stroke-width="5.500"/>`)}</div></div>
      </div>
      <div class="frame f1"></div><div class="frame f2"></div>
      <svg class="over" width="2880" height="1800" viewBox="0 0 2880 1800">
        ${pointer(2136, 587)}${pointer(2168, 581)}
        <path d="M842 212L960 243 1159 292 1160 275 1199 319 1144 336 1153 320 960 262 835 222Q828 214 842 212Z" fill="#ff0d1b"/>
        <path d="M1401 409Q1402 400 1410 405L1503 500 1818 828 1827 813 1839 872 1780 856 1798 848 1482 500Z" fill="#ff0d1b"/>
        <circle cx="1440" cy="900" r="60" fill="rgba(12,20,36,.52)"/>
        <path d="M1424 881l36 19-36 19z" fill="#fff"/>
      </svg>`;
  }
}
